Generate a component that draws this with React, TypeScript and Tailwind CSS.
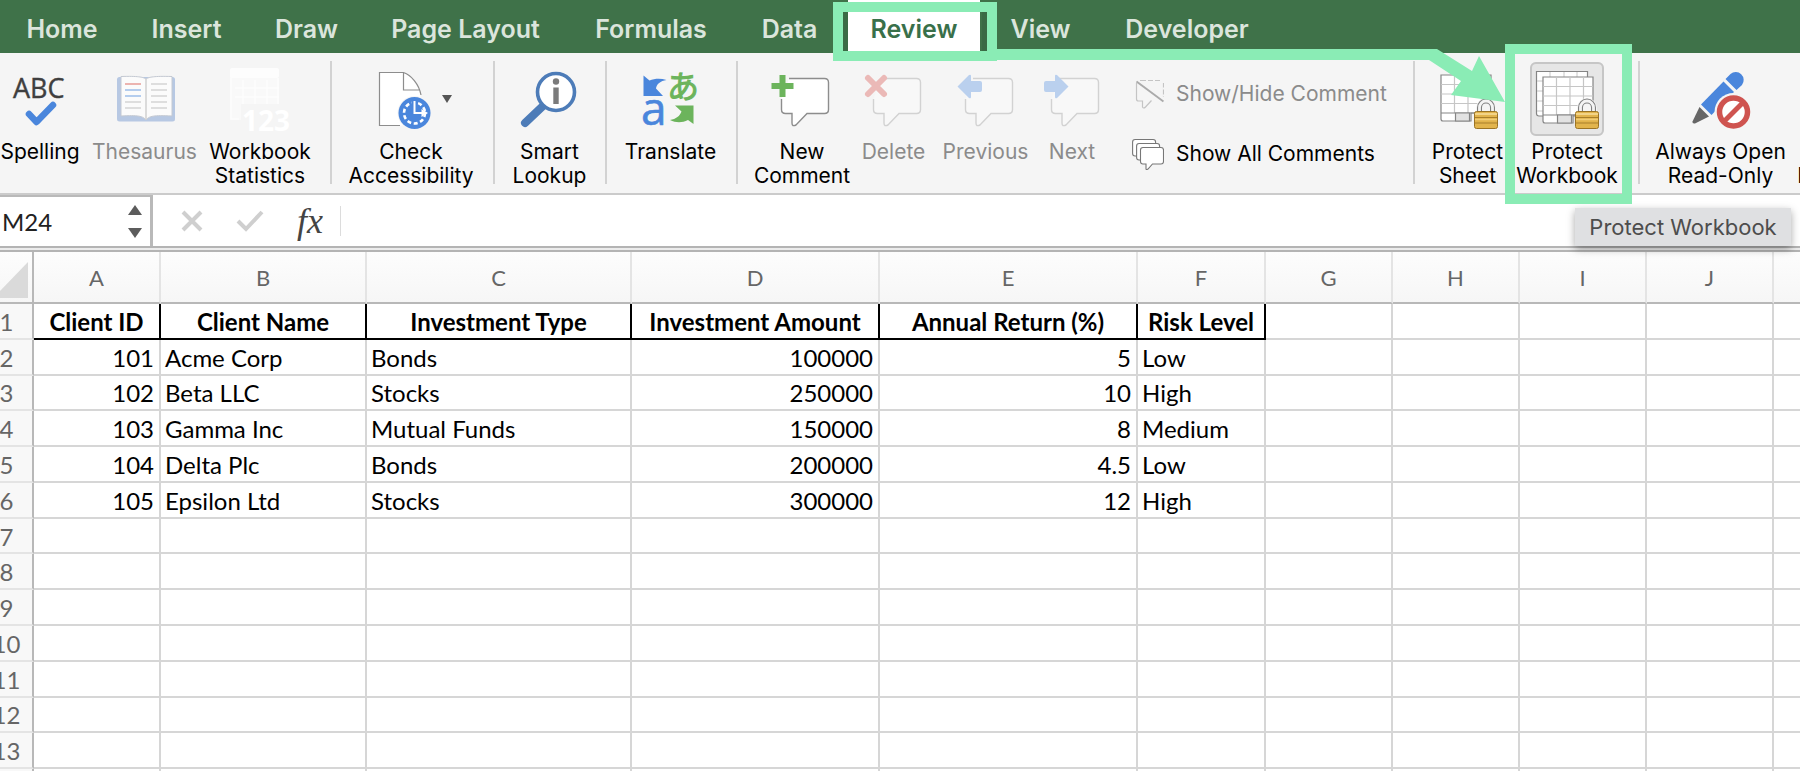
import type { ReactNode } from "react";
import clsx from "clsx";

/* ---------- Ribbon icons (all share a 74px box) ---------- */

function Icon({ children }: { children: ReactNode }) {
  return (
    <svg viewBox="0 0 74 74" className="size-[74px] overflow-visible" fill="none" aria-hidden="true">
      {children}
    </svg>
  );
}

function SpellingIcon() {
  return (
    <Icon>
      <text x="10" y="36" fontSize="27" fill="#3f3f3f" stroke="#3f3f3f" strokeWidth="0.4" fontFamily="'Open Sans', sans-serif">
        ABC
      </text>
      <path d="M26 52l7.500 8L50 43" stroke="#4a86dc" strokeWidth="6.500" strokeLinejoin="round" strokeLinecap="round" />
    </Icon>
  );
}

function ThesaurusIcon() {
  const lines = [22, 28, 34, 40, 46];
  const colors = ["#ecb4b0", "#b4cdee", "#b4cdee", "#dedede", "#dedede"];
  return (
    <Icon>
      <rect x="9" y="15" width="58" height="44.500" rx="2.500" fill="#b7c8e3" />
      <path d="M38 17c-3-2-8-3-25-2.500V54c17-1 22 0 25 4 3-4 8-5 26-4V14.500c-18-.5-23 .5-26 2.500z" fill="#fbfbfb" stroke="#c4c9d2" strokeWidth="1" />
      <path d="M38 17v41" stroke="#d0d0d0" strokeWidth="1.500" />
      {lines.map((y, i) => (
        <g key={y} strokeWidth="2">
          <path d={`M17 ${y}h16`} stroke={colors[i]} />
          <path d={`M43 ${y}h16`} stroke="#dedede" />
        </g>
      ))}
    </Icon>
  );
}

function StatisticsIcon() {
  return (
    <Icon>
      <rect x="7" y="6" width="49" height="10" rx="2" fill="#fdfdfd" />
      <path d="M7 16h49v26H18v16H7z" fill="#f9f9f9" />
      <path d="M8 14v43h8M20 18v24M32 18v24M44 18v24M55 16v26M12 26h44M12 35h44" stroke="#fdfdfd" strokeWidth="1.500" />
      <text x="19" y="69" fontSize="28" fontWeight="700" fill="#ffffff" fontFamily="'Open Sans', sans-serif">
        123
      </text>
    </Icon>
  );
}

function AccessibilityIcon() {
  return (
    <Icon>
      <path d="M29.500 10.500H5.500v53h27l14-20V31C44 23 37 13 29.500 10.500z" fill="#fff" />
      <path d="M26 63.500H5.500v-53h24C37 13 45 22 47 33M29.500 10.500V28H46" stroke="#8d8d8d" strokeWidth="1.200" />
      <circle cx="40.500" cy="51" r="17" fill="#f5f5f5" />
      <circle cx="40.500" cy="51" r="16" fill="#4a86dc" />
      <circle cx="40.500" cy="51" r="10.500" stroke="#fff" strokeWidth="2.600" strokeDasharray="4 2.600" />
      <path d="M40.500 37v14h9" stroke="#4a86dc" strokeWidth="6" />
      <path d="M40.500 39v12h9" stroke="#fff" strokeWidth="2" />
      <path d="M47.500 47l6.500 4-6.500 4z" fill="#fff" />
      <path d="M68 33h10l-5 8z" fill="#555" />
    </Icon>
  );
}

function LookupIcon() {
  return (
    <Icon>
      <path d="M31 43L12 61" stroke="#4d7cb8" strokeWidth="8" strokeLinecap="round" />
      <circle cx="43" cy="30" r="18.500" fill="#fff" stroke="#4d7cb8" strokeWidth="3.600" />
      <circle cx="43" cy="19.500" r="3.200" fill="#7b7b7b" />
      <rect x="40.300" y="25.500" width="5.400" height="16.500" fill="#7b7b7b" />
    </Icon>
  );
}

function TranslateIcon() {
  return (
    <Icon>
      <path d="M9.500 13.500l6 5c5-2 11-2.500 17-.5-6 1-10 4-10.500 8.500l7 7.500h-19.500z" fill="#4a86dc" />
      <text x="33" y="36" fontSize="32" fill="#6cb45c" stroke="#6cb45c" strokeWidth="1" fontFamily="'Noto Sans CJK JP', sans-serif">
        あ
      </text>
      <text x="7" y="63" fontSize="46" fill="#4a86dc" stroke="#4a86dc" strokeWidth="0.6" fontFamily="'Open Sans', sans-serif">
        a
      </text>
      <path d="M41 43.500h18.500V62l-5.500-4c-6 3-12 3-18 0 6-1 10-4 11.500-8.500z" fill="#6cb45c" />
    </Icon>
  );
}

// Speech bubble with its top left corner left open for a badge
function CommentIcon({ faded, children }: { faded?: boolean; children: ReactNode }) {
  return (
    <Icon>
      <path
        d="M24 16.500h35.500q4 0 4 4v27q0 4-4 4H42L31 63q-4 2-4-2v-9.500h-6.500q-4 0-4-4V37"
        fill={faded ? "#f8f8f8" : "#fff"}
        stroke={faded ? "#d2d2d2" : "#8d8d8d"}
        strokeWidth="1.400"
      />
      {children}
    </Icon>
  );
}

function Padlock({ x }: { x: number }) {
  return (
    <g transform={`translate(${x} 36)`}>
      <path d="M2 14V10a10 10 0 0 1 20 0v4z" fill="#f5f5f5" />
      <path d="M5.500 14v-4.500a6.500 6.500 0 0 1 13 0V14" stroke="#808080" strokeWidth="5" />
      <path d="M5.500 14v-4.500a6.500 6.500 0 0 1 13 0V14" stroke="#f4f4f4" strokeWidth="2.800" />
      <rect x="0.500" y="13.500" width="23" height="17" rx="2" fill="#e2b44c" stroke="#9c7424" />
      <path d="M1 16h22" stroke="#f3d488" strokeWidth="2" />
      <path d="M1 19.500h22M1 25h22" stroke="#a87e2a" strokeWidth="1.200" />
      <path d="M1 21.500h22" stroke="#f0cd78" strokeWidth="1.500" />
    </g>
  );
}

function SheetGrid({ x, y }: { x: number; y: number }) {
  return (
    <g transform={`translate(${x} ${y})`} strokeWidth="1.200">
      <path d="M0 0h50v38H30v8H2q-2 0-2-2z" fill="#fff" stroke="#858585" />
      <path d="M13.500 0v38M27 0v38M40.500 0v38M0 9.500h50M0 19h50M0 28.500h50" stroke="#c6c6c6" />
      <path d="M0 38h50" stroke="#858585" />
      <path d="M14.500 38H28.500v8h-14z" fill="#e2e2e2" stroke="#858585" />
    </g>
  );
}

function ProtectSheetIcon() {
  return (
    <Icon>
      <SheetGrid x={10} y={13} />
      <Padlock x={43} />
    </Icon>
  );
}

function ProtectWorkbookIcon() {
  return (
    <Icon>
      <path d="M6.500 9.500h51V54H9q-2.500 0-2.500-2.500z" fill="#fff" stroke="#858585" strokeWidth="1.200" />
      <path d="M20 10v5M34 10v5M47 10v5M7 19h6M7 29h6M7 39h6M7 49h6" stroke="#c6c6c6" />
      <SheetGrid x={13} y={15} />
      <Padlock x={45} />
    </Icon>
  );
}

function ReadOnlyIcon() {
  return (
    <Icon>
      <path d="M41.500 17l5-5a8 8 0 0 1 11.500 11l-5.500 5z" fill="#4a86dc" />
      <path d="M39.500 19.500L50 30 27.500 53 17 42.500z" fill="#4a86dc" />
      <path d="M15.500 45L25 54.500 11 61.500q-3 .5-2.500-2z" fill="#666" />
      <circle cx="49.500" cy="50" r="19" fill="#f5f5f5" />
      <circle cx="49.500" cy="50" r="14" fill="#fff" stroke="#cf5450" strokeWidth="5.500" />
      <path d="M40 59.500l19-19" stroke="#cf5450" strokeWidth="5" />
    </Icon>
  );
}

function HideCommentIcon() {
  return (
    <svg viewBox="0 0 32 32" className="size-8" fill="none" aria-hidden="true">
      <path d="M4.500 5v16q0 2 2 2h4v6q1 2 3 0l6-6.500M31.500 5v14M8 2.500h22" stroke="#c4c4c4" strokeWidth="1.200" />
      <path d="M31.500 2.500v18" stroke="#f5f5f5" strokeDasharray="2 5" strokeWidth="2" />
      <path d="M14 2.500h18" stroke="#f5f5f5" strokeDasharray="2 5" strokeWidth="2" />
      <path d="M4.500 3.500l27 20" stroke="#ababab" strokeWidth="2" />
    </svg>
  );
}

function AllCommentsIcon() {
  return (
    <svg viewBox="0 0 32 32" className="size-8" fill="#fff" stroke="#777" strokeWidth="1.100" aria-hidden="true">
      <rect x="0.600" y="1.500" width="23" height="16.500" rx="2.500" />
      <rect x="4.600" y="5.500" width="23" height="16.500" rx="2.500" />
      <path d="M11 9.500h18q2.500 0 2.500 2.500v11.500q0 2.500-2.500 2.500h-8.500l-4.500 5q-2 1.500-2-.5V26h-3q-2.500 0-2.500-2.500V12q0-2.500 2.500-2.500z" />
    </svg>
  );
}

/* ---------- Tabs ---------- */

const tabs = [
  { name: "Home", width: "w-[124px]" },
  { name: "Insert", width: "w-[125px]" },
  { name: "Draw", width: "w-[115px]" },
  { name: "Page Layout", width: "w-[203px]" },
  { name: "Formulas", width: "w-[168px]" },
  { name: "Data", width: "w-[109px]" },
  { name: "Review", width: "w-[140px]" },
  { name: "View", width: "w-[113px]" },
  { name: "Developer", width: "w-[180px]" },
];

function TabBar() {
  return (
    <nav className="flex h-[53px] bg-[#3f7249]">
      {tabs.map(({ name, width }) =>
        name === "Review" ? (
          <div key={name} className={clsx("relative flex shrink-0 px-1", width)}>
            <button className="w-full bg-white text-[25px] leading-[58px] font-semibold text-[#39704a]">{name}</button>
            {/* Callout frame and the arrow that runs to the protect button */}
            <div className="pointer-events-none absolute top-[2px] -left-[11px] z-20 h-[59px] w-[164px] border-10 border-[#8aecb5]">
              <div className="h-full border-x-5 border-[#3a6a45]" />
            </div>
            <svg className="pointer-events-none absolute top-0 left-[150px] z-20 h-[110px] w-[520px]" viewBox="0 0 520 110" aria-hidden="true">
              <path d="M0 49h443l35 22 7-15 26 46-54-7 10-14-32-21H0z" fill="#8aecb5" />
            </svg>
          </div>
        ) : (
          <button key={name} className={clsx("shrink-0 text-[25px] leading-[58px] font-semibold text-[#dbe5dc]", width)}>
            {name}
          </button>
        ),
      )}
    </nav>
  );
}

/* ---------- Ribbon ---------- */

type ToolProps = {
  lines: string[];
  width: string;
  icon: ReactNode;
  disabled?: boolean;
  active?: boolean;
  children?: ReactNode;
};

function Tool({ lines, width, icon, disabled, active, children }: ToolProps) {
  return (
    <button
      disabled={disabled}
      className={clsx(
        "relative flex shrink-0 flex-col items-center gap-1 pt-[9px] text-[21px] leading-6 whitespace-nowrap",
        disabled ? "text-[#8b8b8b]" : "text-black",
        width,
      )}
    >
      <span className={clsx("size-[74px]", active && "rounded-md bg-[#e6e6e6] outline-2 -outline-offset-2 outline-[#c6c6c6]")}>{icon}</span>
      <span>
        {lines.map((line) => (
          <span key={line} className="block">
            {line}
          </span>
        ))}
      </span>
      {children}
    </button>
  );
}

function Group({ className, children }: { className: string; children: ReactNode }) {
  return (
    <div className={clsx("flex shrink-0", className)}>
      {children}
      <div className="mt-2 ml-auto h-[123px] w-[2px] bg-[#d2d2d2]" />
    </div>
  );
}

function Ribbon() {
  return (
    <div className="flex h-[142px] border-b-2 border-[#cbcbcb] bg-[#f5f5f5]">
      <Group className="w-[332px]">
        <Tool lines={["Spelling"]} width="w-[80px]" icon={<SpellingIcon />} />
        <Tool lines={["Thesaurus"]} width="w-[129px]" icon={<ThesaurusIcon />} disabled />
        <Tool lines={["Workbook", "Statistics"]} width="w-[102px]" icon={<StatisticsIcon />} />
      </Group>
      <Group className="w-[163px]">
        <Tool lines={["Check", "Accessibility"]} width="w-[158px]" icon={<AccessibilityIcon />} />
      </Group>
      <Group className="w-[112px]">
        <Tool lines={["Smart", "Lookup"]} width="w-[109px]" icon={<LookupIcon />} />
      </Group>
      <Group className="w-[131px]">
        <Tool lines={["Translate"]} width="w-[127px]" icon={<TranslateIcon />} />
      </Group>
      <Group className="w-[677px] pl-4">
        <Tool
          lines={["New", "Comment"]}
          width="w-[96px]"
          icon={
            <CommentIcon>
              <path d="M17.500 13v22M6.500 24h22" stroke="#6cb45c" strokeWidth="6" />
            </CommentIcon>
          }
        />
        <Tool
          lines={["Delete"]}
          width="w-[87px]"
          disabled
          icon={
            <CommentIcon faded>
              <path d="M11 16l16 16M27 16l-16 16" stroke="#ebb9b7" strokeWidth="6" strokeLinecap="round" />
            </CommentIcon>
          }
        />
        <Tool
          lines={["Previous"]}
          width="w-[97px]"
          disabled
          icon={
            <CommentIcon faded>
              <path d="M8.500 24.500L20 13q2-1 2 1v5h9q2 0 2 2v7q0 2-2 2h-9v5q0 2-2 1z" fill="#bad0ee" />
            </CommentIcon>
          }
        />
        <Tool
          lines={["Next"]}
          width="w-[76px]"
          disabled
          icon={
            <CommentIcon faded>
              <path d="M33.500 24.500L22 13q-2-1-2 1v5h-9q-2 0-2 2v7q0 2 2 2h9v5q0 2 2 1z" fill="#bad0ee" />
            </CommentIcon>
          }
        />
        <div className="ml-[22px] flex flex-col gap-7 pt-[25px] text-[21px] leading-8 whitespace-nowrap">
          <button disabled className="flex gap-3 text-[#8b8b8b]">
            <HideCommentIcon />
            Show/Hide Comment
          </button>
          <button className="flex gap-3 text-black">
            <AllCommentsIcon />
            Show All Comments
          </button>
        </div>
      </Group>
      <Group className="w-[225px] pl-1">
        <Tool lines={["Protect", "Sheet"]} width="w-[97px]" icon={<ProtectSheetIcon />} />
        <Tool lines={["Protect", "Workbook"]} width="w-[102px]" icon={<ProtectWorkbookIcon />} active>
          <span className="pointer-events-none absolute -top-[9px] -left-[11px] z-20 h-[160px] w-[127px] border-10 border-[#8aecb5]" />
          <span
            role="tooltip"
            className="absolute top-[155px] left-[59px] z-10 w-[216px] bg-[#dfe0e2] text-center text-[22px] leading-[38px] text-[#4d4d4d] shadow-[0_3px_8px_rgba(0,0,0,0.35)]"
          >
            Protect Workbook
          </span>
        </Tool>
      </Group>
      <div className="flex shrink-0 gap-3 pl-4">
        <Tool lines={["Always Open", "Read-Only"]} width="w-[129px]" icon={<ReadOnlyIcon />} />
        <Tool lines={["Restrict", "Permission"]} width="w-[110px]" icon={null} />
      </div>
    </div>
  );
}

/* ---------- Formula bar ---------- */

function FormulaBar() {
  return (
    <div className="flex h-[51px] bg-white">
      <div className="flex w-[153px] shrink-0 items-center justify-between border-t-2 border-r-3 border-[#b9b9b9] pr-2 pl-[2px]">
        <input aria-label="Name box" defaultValue="M24" className="w-[100px] font-[Lato,sans-serif] text-[24px] text-[#222] outline-none" />
        <div className="flex flex-col gap-[13px]">
          <button aria-label="Previous name">
            <svg viewBox="0 0 14 10" className="h-[10px] w-[14px]" fill="#5c5c5c">
              <path d="M7 0l7 10H0z" />
            </svg>
          </button>
          <button aria-label="Next name">
            <svg viewBox="0 0 14 10" className="h-[10px] w-[14px]" fill="#5c5c5c">
              <path d="M7 10l7-10H0z" />
            </svg>
          </button>
        </div>
      </div>
      <div className="flex items-center">
        <button aria-label="Cancel" className="ml-7">
          <svg viewBox="0 0 22 22" className="size-[22px]" stroke="#cfcfcf" strokeWidth="4">
            <path d="M2 2l18 18M20 2L2 20" />
          </svg>
        </button>
        <button aria-label="Enter" className="ml-[33px]">
          <svg viewBox="0 0 28 22" className="h-[22px] w-7" fill="none" stroke="#cfcfcf" strokeWidth="4">
            <path d="M2 11l8 8L26 2" />
          </svg>
        </button>
        <button aria-label="Insert function" className="ml-8 w-7 text-center font-['Liberation_Serif',serif] text-[36px] leading-[44px] text-[#444] italic">
          fx
        </button>
        <div className="ml-4 h-[30px] w-px bg-[#dcdcdc]" />
      </div>
      <input aria-label="Formula" className="min-w-0 flex-1 px-2 font-[Lato,sans-serif] text-[22px] outline-none" />
    </div>
  );
}

/* ---------- Sheet ---------- */

const columns = [
  { letter: "A", width: "w-[127px]", title: "Client ID" },
  { letter: "B", width: "w-[206px]", title: "Client Name" },
  { letter: "C", width: "w-[265px]", title: "Investment Type" },
  { letter: "D", width: "w-[248px]", title: "Investment Amount" },
  { letter: "E", width: "w-[258px]", title: "Annual Return (%)" },
  { letter: "F", width: "w-[128px]", title: "Risk Level" },
  { letter: "G", width: "w-[127px]" },
  { letter: "H", width: "w-[127px]" },
  { letter: "I", width: "w-[127px]" },
  { letter: "J", width: "w-[127px]" },
  { letter: "", width: "w-auto" },
];

const clients: (string | number)[][] = [
  [101, "Acme Corp", "Bonds", 100000, 5, "Low"],
  [102, "Beta LLC", "Stocks", 250000, 10, "High"],
  [103, "Gamma Inc", "Mutual Funds", 150000, 8, "Medium"],
  [104, "Delta Plc", "Bonds", 200000, 4.5, "Low"],
  [105, "Epsilon Ltd", "Stocks", 300000, 12, "High"],
];

const rowNumbers = Array.from({ length: 14 }, (_, i) => i + 1);

function Cell({ row, col }: { row: number; col: number }) {
  const title = columns[col].title;
  if (row === 1 && title) {
    return <td className="border-r-2 border-b-2 border-black px-0 pt-[2px] text-center font-bold">{title}</td>;
  }
  const value = clients[row - 2]?.[col];
  return (
    <td className={clsx("border-r-2 border-b-2 border-[#d6d6d6] pt-[2px] pr-[5px] pl-1 last:border-r-0", typeof value === "number" && "text-right")}>
      {value}
    </td>
  );
}

function Sheet() {
  return (
    <table className="h-[553px] w-full table-fixed border-separate border-spacing-0 bg-white font-[Lato,sans-serif] text-[24px] leading-[26px] whitespace-nowrap text-black">
      <colgroup>
        <col className="w-[34px]" />
        {columns.map((c) => (
          <col key={c.letter} className={c.width} />
        ))}
      </colgroup>
      <thead>
        <tr className="h-[52px] bg-linear-to-b from-[#fdfdfd] to-[#f6f6f6] text-[22px] text-[#666]">
          <th className="border-r-2 border-b-2 border-[#b8b8b8] p-0">
            <svg viewBox="0 0 28 36" className="mt-[6px] h-9 w-7" fill="#dadada" aria-hidden="true">
              <path d="M28 0v36H0v-7z" />
            </svg>
          </th>
          {columns.map((c) => (
            <th key={c.letter} className="border-r-2 border-b-2 border-r-[#e4e4e4] border-b-[#b8b8b8] pt-[2px] font-normal last:border-r-0">
              {c.letter}
            </th>
          ))}
        </tr>
      </thead>
      <tbody>
        {rowNumbers.map((row) => (
          <tr key={row}>
            <th className="border-r-2 border-b-2 border-r-[#b8b8b8] border-b-[#e4e4e4] bg-[#f8f8f8] p-0 pt-[2px] font-normal text-[#666]">
              <div className="flex w-[13px] justify-center">{row}</div>
            </th>
            {columns.map((c, col) => (
              <Cell key={c.letter} row={row} col={col} />
            ))}
          </tr>
        ))}
      </tbody>
    </table>
  );
}

export default function App() {
  return (
    <div className="h-screen overflow-hidden bg-white font-[Inter,sans-serif]">
      <TabBar />
      <Ribbon />
      <FormulaBar />
      <div className="h-[6px] border-y-2 border-[#b4b4b4] bg-[#ececec]" />
      <Sheet />
    </div>
  );
}
